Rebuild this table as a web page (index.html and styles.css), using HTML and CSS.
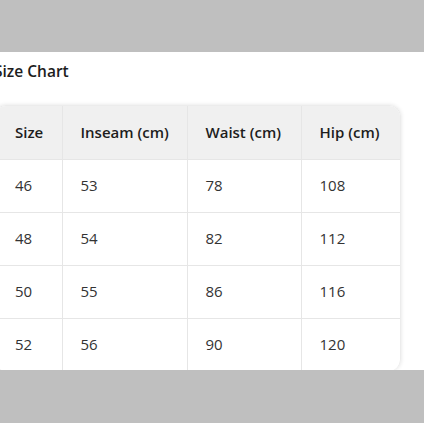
FILE: index.html
```html
<!DOCTYPE html>
<html>
<head>
<meta charset="utf-8">
<link rel="stylesheet" href="styles.css">
</head>
<body>
<div class="bar"></div>
<main class="content">
  <h2 class="title">Size Chart</h2>
  <div class="card">
    <table class="chart">
      <colgroup>
        <col class="c1"><col class="c2"><col class="c3"><col class="c4">
      </colgroup>
      <thead>
        <tr><th>Size</th><th>Inseam (cm)</th><th>Waist (cm)</th><th>Hip (cm)</th></tr>
      </thead>
      <tbody>
        <tr><td>46</td><td>53</td><td>78</td><td>108</td></tr>
        <tr><td>48</td><td>54</td><td>82</td><td>112</td></tr>
        <tr><td>50</td><td>55</td><td>86</td><td>116</td></tr>
        <tr><td>52</td><td>56</td><td>90</td><td>120</td></tr>
      </tbody>
    </table>
  </div>
</main>
<div class="bar bottom"></div>
</body>
</html>
```
FILE: styles.css
```css
html, body { margin: 0; padding: 0; background: #fff; }
body { font-family: "Open Sans", "Noto Sans", sans-serif; color: #222; overflow: hidden; height: 423px; }
.bar { height: 52px; background: #bfbfbf; }
.bar.bottom { height: 53px; }
.content { height: 318px; margin-left: -6px; overflow: hidden; }
.title { margin: 0; padding-top: 9px; height: 53px; box-sizing: border-box; font-size: 15.5px; font-weight: 600; line-height: 21px; color: #1d1d1d; }
.card { width: 407px; border-radius: 12px; box-shadow: 0 0 4px rgba(0,0,0,0.12); overflow: hidden; border: 1px solid #ececec; border-bottom: none; box-sizing: border-box; }
.chart { width: 100%; border-collapse: collapse; table-layout: fixed; }
.c1 { width: 67px; } .c2 { width: 125px; } .c3 { width: 114px; } .c4 { width: auto; }
.chart th, .chart td { text-align: left; padding: 0 0 1px 18px; height: 53px; box-sizing: border-box; font-size: 15px; border-left: 1px solid #e6e6e6; border-top: 1px solid #e6e6e6; }
.chart tr > :first-child { border-left: none; padding-left: 20px; }
.chart thead th { background: #f0f0f0; font-weight: 600; color: #1d1d1d; border-top: none; }
.chart td { color: #333; font-weight: 400; }
```
